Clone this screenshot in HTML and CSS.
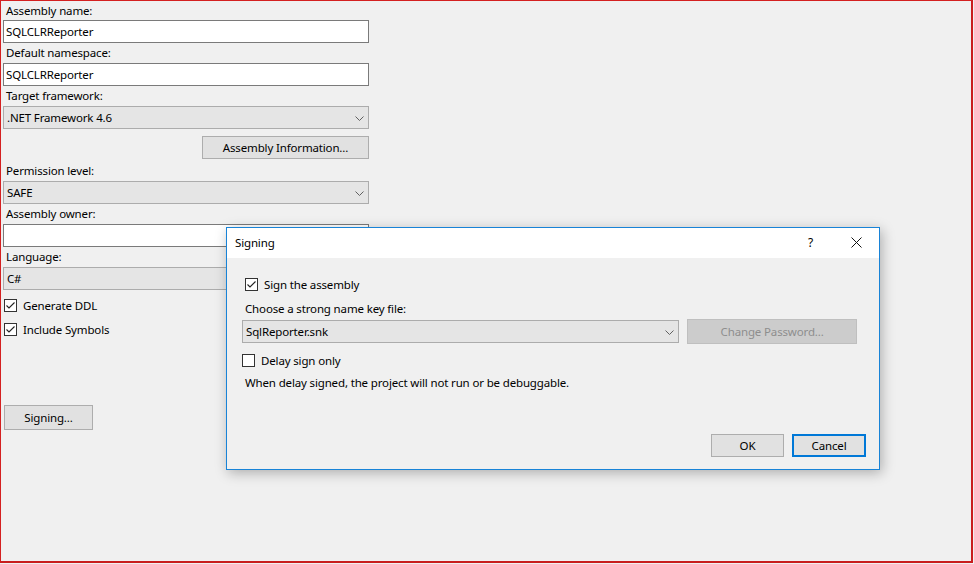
FILE: index.html
```html
<!DOCTYPE html>
<html>
<head>
<meta charset="utf-8">
<link rel="stylesheet" href="styles.css">
</head>
<body>
<div class="frame">
  <div class="panel">
    <div class="lbl">Assembly name:</div>
    <div class="textbox">SQLCLRReporter</div>
    <div class="lbl">Default namespace:</div>
    <div class="textbox">SQLCLRReporter</div>
    <div class="lbl">Target framework:</div>
    <div class="combo"><span>.NET Framework 4.6</span><svg class="chev" width="9" height="5" viewBox="0 0 9 5"><path d="M0.5 0.5 L4.5 4.5 L8.5 0.5" fill="none" stroke="#606060" stroke-width="1"/></svg></div>
    <div class="btnrow"><div class="btn btn-info">Assembly Information...</div></div>
    <div class="lbl lbl-perm">Permission level:</div>
    <div class="combo"><span>SAFE</span><svg class="chev" width="9" height="5" viewBox="0 0 9 5"><path d="M0.5 0.5 L4.5 4.5 L8.5 0.5" fill="none" stroke="#606060" stroke-width="1"/></svg></div>
    <div class="lbl">Assembly owner:</div>
    <div class="textbox"></div>
    <div class="lbl">Language:</div>
    <div class="combo"><span>C#</span><svg class="chev" width="9" height="5" viewBox="0 0 9 5"><path d="M0.5 0.5 L4.5 4.5 L8.5 0.5" fill="none" stroke="#606060" stroke-width="1"/></svg></div>
    <div class="check check-ddl"><span class="box"><svg width="11" height="11" viewBox="0 0 11 11"><path d="M1.5 5.5 L4 8 L9.5 2.5" fill="none" stroke="#222" stroke-width="1.1"/></svg></span><span>Generate DDL</span></div>
    <div class="check check-sym"><span class="box"><svg width="11" height="11" viewBox="0 0 11 11"><path d="M1.5 5.5 L4 8 L9.5 2.5" fill="none" stroke="#222" stroke-width="1.1"/></svg></span><span>Include Symbols</span></div>
    <div class="btn btn-sign">Signing...</div>
  </div>

  <div class="dialog">
    <div class="titlebar">
      <span class="title">Signing</span>
      <span class="help">?</span>
      <svg class="close" width="11" height="11" viewBox="0 0 11 11"><path d="M0.5 0.5 L10.5 10.5 M10.5 0.5 L0.5 10.5" fill="none" stroke="#111" stroke-width="1"/></svg>
    </div>
    <div class="dbody">
      <div class="check check-signasm"><span class="box"><svg width="11" height="11" viewBox="0 0 11 11"><path d="M1.5 5.5 L4 8 L9.5 2.5" fill="none" stroke="#222" stroke-width="1.1"/></svg></span><span>Sign the assembly</span></div>
      <div class="dlbl">Choose a strong name key file:</div>
      <div class="keyrow">
        <div class="combo combo-key"><span>SqlReporter.snk</span><svg class="chev" width="9" height="5" viewBox="0 0 9 5"><path d="M0.5 0.5 L4.5 4.5 L8.5 0.5" fill="none" stroke="#606060" stroke-width="1"/></svg></div>
        <div class="btn btn-disabled">Change Password...</div>
      </div>
      <div class="check check-delay"><span class="box"></span><span>Delay sign only</span></div>
      <div class="note">When delay signed, the project will not run or be debuggable.</div>
      <div class="actions">
        <div class="btn btn-ok">OK</div>
        <div class="btn btn-cancel">Cancel</div>
      </div>
    </div>
  </div>
</div>
</body>
</html>
```
FILE: styles.css
```css
html, body {
  margin: 0;
  padding: 0;
  background: #f0f0f0;
}
body {
  font-family: "Segoe UI", "Noto Sans", sans-serif;
  font-size: 11.5px;
  letter-spacing: -0.15px;
  color: #000;
}
.frame {
  position: relative;
  width: 970px;
  height: 560px;
  border-left: 1px solid #d42020;
  border-top: 1px solid #d42020;
  border-right: 2px solid #c81e1e;
  border-bottom: 2px solid #c81e1e;
  background: #f0f0f0;
  overflow: hidden;
}
.panel {
  display: flex;
  flex-direction: column;
  width: 366px;
  margin-left: 2px;
}
.lbl {
  height: 20px;
  line-height: 20px;
  padding-left: 3px;
  box-sizing: border-box;
}
.panel > .lbl:first-child {
  height: 19px;
  line-height: 19px;
}
.lbl-perm {
  height: 22px;
  line-height: 24px;
}
.textbox {
  height: 23px;
  box-sizing: border-box;
  border: 1px solid #7a7a7a;
  background: #fff;
  padding-left: 2px;
  line-height: 21px;
}
.combo {
  height: 23px;
  box-sizing: border-box;
  border: 1px solid #acacac;
  background: #e5e5e5;
  padding-left: 3px;
  padding-right: 4px;
  display: flex;
  align-items: center;
  justify-content: space-between;
}
.chev {
  display: block;
  margin-top: 1px;
}
.btnrow {
  display: flex;
  justify-content: flex-end;
  margin-top: 7px;
}
.btn {
  box-sizing: border-box;
  border: 1px solid #adadad;
  background: #e1e1e1;
  display: flex;
  align-items: center;
  justify-content: center;
}
.btn-info {
  width: 167px;
  height: 23px;
}
.check {
  display: flex;
  align-items: center;
  height: 13px;
  gap: 6px;
}
.box {
  width: 13px;
  height: 13px;
  box-sizing: border-box;
  border: 1px solid #333;
  background: #fff;
  display: flex;
  align-items: center;
  justify-content: center;
  flex: none;
}
.box svg { display: block; }
.check-ddl { margin-top: 9px; margin-left: 1px; }
.check-sym { margin-top: 11px; margin-left: 1px; }
.btn-sign {
  margin-top: 69px;
  margin-left: 1px;
  width: 89px;
  height: 25px;
}

/* dialog */
.dialog {
  position: absolute;
  left: 225px;
  top: 226px;
  width: 654px;
  height: 243px;
  box-sizing: border-box;
  border: 1px solid #1883d7;
  background: #f0f0f0;
  box-shadow: 2px 3px 12px rgba(0, 0, 0, 0.28);
  display: flex;
  flex-direction: column;
}
.titlebar {
  height: 30px;
  background: #fff;
  display: flex;
  align-items: center;
  padding-left: 8px;
  padding-right: 17px;
  flex: none;
}
.title {
  flex: 1;
  margin-top: -1px;
}
.help {
  font-size: 12px;
  margin-right: 38px;
  margin-top: -2px;
}
.close { display: block; margin-top: -1px; }
.dbody {
  display: flex;
  flex-direction: column;
  padding-left: 15px;
  padding-right: 22px;
  flex: 1;
}
.check-signasm {
  margin-top: 20px;
  margin-left: 3px;
}
.dlbl {
  margin-top: 9px;
  height: 17px;
  line-height: 17px;
  padding-left: 3px;
}
.keyrow {
  display: flex;
  align-items: center;
  gap: 8px;
  margin-top: 2px;
}
.combo-key {
  width: 438px;
  height: 23px;
}
.btn-disabled {
  width: 170px;
  height: 25px;
  background: #cccccc;
  border-color: #bfbfbf;
  color: #8e8e8e;
}
.check-delay {
  margin-top: 10px;
}
.note {
  margin-top: 8px;
  padding-left: 3px;
  height: 16px;
  line-height: 16px;
}
.actions {
  display: flex;
  justify-content: flex-end;
  gap: 8px;
  margin-top: auto;
  margin-bottom: 12px;
  margin-right: -9px;
}
.btn-ok {
  width: 73px;
  height: 23px;
}
.btn-cancel {
  width: 74px;
  height: 23px;
  border: 2px solid #0078d7;
}
```
